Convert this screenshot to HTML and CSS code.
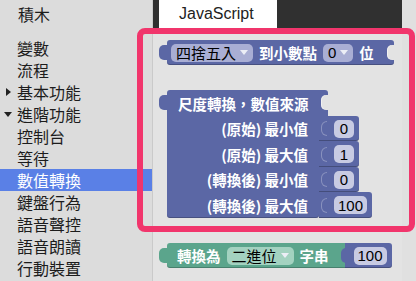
FILE: index.html
```html
<!DOCTYPE html>
<html lang="zh-Hant">
<head>
  <meta charset="UTF-8">
  <title>積木</title>
  <link rel="stylesheet" href="styles.css">
</head>
<body>
  <div class="app">
    <aside class="toolbox">
      <div class="toolbox-title">積木</div>
      <ul class="cats">
        <li>變數</li>
        <li>流程</li>
        <li class="closed">基本功能</li>
        <li class="open">進階功能</li>
        <li>控制台</li>
        <li>等待</li>
        <li class="active">數值轉換</li>
        <li>鍵盤行為</li>
        <li>語音聲控</li>
        <li>語音朗讀</li>
        <li>行動裝置</li>
      </ul>
    </aside>

    <main class="editor">
      <div class="tabbar">
        <div class="tab">JavaScript</div>
      </div>
      <div class="flyout">
        <!-- round to decimals -->
        <div class="block math round">
          <span class="field drop">四捨五入<i class="arrow"></i></span>
          <span>到小數點</span>
          <span class="field drop digits"><b class="val">0</b><i class="arrow"></i></span>
          <span>位</span>
        </div>

        <!-- map range -->
        <div class="scale">
          <div class="block math scale-head">尺度轉換，數值來源</div>
          <div class="scale-row r1"><span class="label">(原始) 最小值</span><div class="num"><span class="plug"></span><span class="field val">0</span></div></div>
          <div class="scale-row r2"><span class="label">(原始) 最大值</span><div class="num"><span class="plug"></span><span class="field val">1</span></div></div>
          <div class="scale-row r1"><span class="label">(轉換後) 最小值</span><div class="num"><span class="plug"></span><span class="field val">0</span></div></div>
          <div class="scale-row r2"><span class="label">(轉換後) 最大值</span><div class="num"><span class="plug"></span><span class="field val">100</span></div></div>
        </div>

        <!-- to base string -->
        <div class="convert">
          <div class="block text">
            <span>轉換為</span>
            <span class="field drop">二進位<i class="arrow"></i></span>
            <span>字串</span>
          </div>
          <div class="num attached"><span class="field val">100</span></div>
        </div>
      </div>
    </main>

    <div class="scrollbar"></div>
    <div class="highlight"></div>
  </div>
</body>
</html>
```

FILE: styles.css
```css
body {
  margin: 0;
  font-family: "Noto Sans CJK TC", sans-serif;
  background: #dcdcdc;
}
.app {
  position: relative;
  display: flex;
  width: 416px;
  height: 281px;
  overflow: hidden;
}

/* toolbox */
.toolbox {
  width: 152px;
  background: #dcdcdc;
  border-right: 1px solid #cacaca;
}
.toolbox-title {
  height: 28px;
  line-height: 28px;
  padding-left: 18px;
  font-size: 16px;
  color: #1c1c1c;
}
.cats {
  list-style: none;
  margin: 9px 0 0 0;
  padding: 0;
}
.cats li {
  display: flex;
  align-items: center;
  height: 22px;
  padding-left: 17px;
  font-size: 16px;
  color: #1c1c1c;
}
.cats li.closed::before {
  content: "";
  margin-left: -11px;
  margin-right: 6px;
  border-left: 5px solid #222;
  border-top: 4px solid transparent;
  border-bottom: 4px solid transparent;
}
.cats li.open::before {
  content: "";
  margin-left: -13px;
  margin-right: 5px;
  border-top: 5px solid #222;
  border-left: 4px solid transparent;
  border-right: 4px solid transparent;
}
.cats li.active {
  background: #5a80e6;
  color: #fff;
}

/* editor */
.editor {
  flex: 1;
  display: flex;
  flex-direction: column;
}
.tabbar {
  height: 28px;
  background: #303030;
  display: flex;
  padding-left: 6px;
}
.tab {
  width: 98px;
  padding-left: 20px;
  background: #fff;
  color: #222;
  font: 16px/28px "Liberation Sans", Arial, sans-serif;
}
.flyout {
  flex: 1;
  background: #e3e3e3;
  padding: 12px 0 0 14px;
  display: flex;
  flex-direction: column;
  align-items: flex-start;
  gap: 25px;
}
.scrollbar {
  width: 14px;
  background: #e0e0e0;
}

/* blocks */
.block {
  position: relative;
  display: flex;
  align-items: center;
  gap: 6px;
  height: 25px;
  box-sizing: border-box;
  color: #fff;
  font-size: 14.5px;
  font-weight: bold;
  border-radius: 3px;
  box-shadow: inset 0 -1px 0 rgba(0,0,0,0.22);
}
.block.math { background: #5b67a5; }
.block.text { background: #5ba58c; }
.block::before {
  content: "";
  position: absolute;
  left: -8px;
  top: 5px;
  width: 8px;
  height: 15px;
  background: inherit;
  border-radius: 5px 0 0 5px;
}
.round {
  padding: 0 20px 0 4px;
}
.round::after, .scale-head::after {
  content: "";
  position: absolute;
  right: 0;
  top: 5px;
  width: 7px;
  height: 15px;
  background: #e3e3e3;
  border-radius: 5px 0 0 5px;
  box-shadow: inset 1px 0 0 rgba(255,255,255,0.5);
}
.field {
  display: flex;
  align-items: center;
  height: 18px;
  color: #000;
  font-size: 15px;
  font-weight: normal;
  border-radius: 5px;
}
.drop {
  padding: 0 5px 0 5px;
}
.math .drop { background: #a9aed4; }
.text .drop { background: #a3d2c0; }
.arrow {
  margin-left: 4px;
  border-top: 5px solid #eceef6;
  border-left: 4px solid transparent;
  border-right: 4px solid transparent;
}
.val {
  font-family: "Liberation Sans", Arial, sans-serif;
  font-weight: normal;
  font-size: 15px;
}
.digits {
  padding-left: 5px;
}

/* map range block */
.scale {
  display: flex;
  flex-direction: column;
  align-items: flex-start;
}
.scale-head {
  width: 161px;
  height: 26px;
  padding-left: 11px;
  border-radius: 3px 3px 0 0;
  box-shadow: none;
}
.scale-row {
  display: flex;
  align-items: stretch;
  height: 25px;
}
.scale-row.r2 { height: 26px; }
.scale-row:last-child .label {
  border-radius: 0 0 3px 3px;
  box-shadow: inset 0 -1px 0 rgba(0,0,0,0.22);
}
.label {
  width: 152px;
  box-sizing: border-box;
  padding-right: 11px;
  display: flex;
  align-items: center;
  justify-content: flex-end;
  background: #5b67a5;
  color: #fff;
  font-size: 14.5px;
  font-weight: bold;
}
.num {
  display: flex;
  align-items: center;
  background: #5b67a5;
  padding: 0 5px 0 2px;
  border-radius: 0 3px 3px 0;
  box-shadow: inset 0 -1px 0 rgba(0,0,0,0.25);
}
.plug {
  width: 5px;
  height: 13px;
  margin-right: 7px;
  border: 1px solid rgba(255,255,255,0.28);
  border-right: 0;
  border-radius: 6px 0 0 6px;
}
.num .field {
  justify-content: center;
  min-width: 20px;
  padding: 0 4px;
  box-sizing: border-box;
  background: #c8cbe3;
}

/* to base string block */
.convert {
  display: flex;
}
.convert .block {
  padding: 0 16px 0 10px;
  border-radius: 3px 0 0 3px;
}
.num.attached {
  position: relative;
  height: 25px;
  box-sizing: border-box;
  padding-left: 9px;
}
.num.attached::before {
  content: "";
  position: absolute;
  left: -4px;
  top: 5px;
  width: 5px;
  height: 15px;
  background: #5b67a5;
  border-radius: 5px 0 0 5px;
}

/* annotation frame over toolbox and flyout */
.highlight {
  position: absolute;
  left: 137px;
  top: 28px;
  width: 278px;
  height: 204px;
  box-sizing: border-box;
  border: 6px solid #f1356c;
  border-radius: 8px;
}
```
